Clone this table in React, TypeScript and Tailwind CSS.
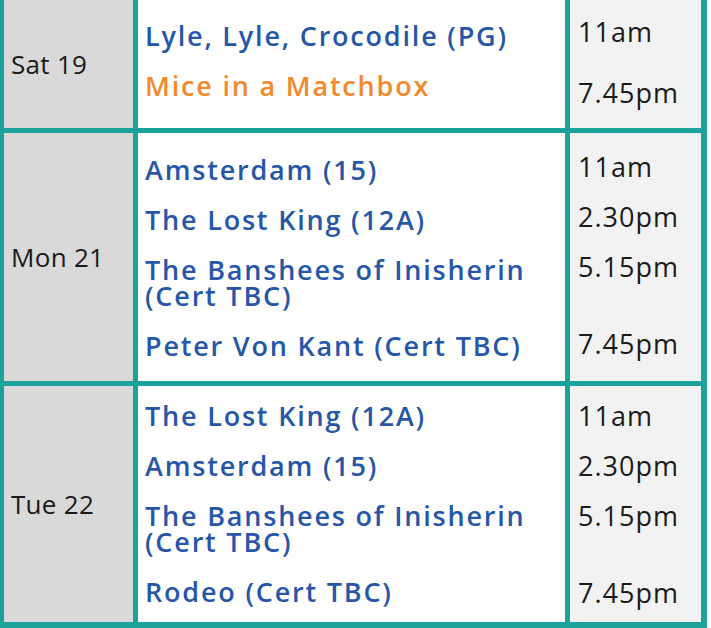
type Film = { title: string[]; orange?: boolean };
type Slot = { time: string; cls: string };
type Day = { day: string; cls: string; filmsCls: string; timesCls: string; films: Film[]; times: Slot[] };

const days: Day[] = [
  {
    day: "Sat 19",
    cls: "h-[128px]",
    filmsCls: "pt-[23px]",
    timesCls: "pt-[19px]",
    films: [{ title: ["Lyle, Lyle, Crocodile (PG)"] }, { title: ["Mice in a Matchbox"], orange: true }],
    times: [
      { time: "11am", cls: "" },
      { time: "7.45pm", cls: "mt-[35px]" },
    ],
  },
  {
    day: "Mon 21",
    cls: "h-[248px]",
    filmsCls: "pt-[24px]",
    timesCls: "pt-[21px]",
    films: [
      { title: ["Amsterdam (15)"] },
      { title: ["The Lost King (12A)"] },
      { title: ["The Banshees of Inisherin", "(Cert TBC)"] },
      { title: ["Peter Von Kant (Cert TBC)"] },
    ],
    times: [
      { time: "11am", cls: "" },
      { time: "2.30pm", cls: "mt-[24px]" },
      { time: "5.15pm", cls: "mt-[24px]" },
      { time: "7.45pm", cls: "mt-[51px]" },
    ],
  },
  {
    day: "Tue 22",
    cls: "h-[236px]",
    filmsCls: "pt-[17px]",
    timesCls: "pt-[17px]",
    films: [
      { title: ["The Lost King (12A)"] },
      { title: ["Amsterdam (15)"] },
      { title: ["The Banshees of Inisherin", "(Cert TBC)"] },
      { title: ["Rodeo (Cert TBC)"] },
    ],
    times: [
      { time: "11am", cls: "" },
      { time: "2.30pm", cls: "mt-[24px]" },
      { time: "5.15pm", cls: "mt-[24px]" },
      { time: "7.45pm", cls: "mt-[51px]" },
    ],
  },
];

export default function App() {
  return (
    <div className="w-[711px] h-[628px] bg-white font-['Open_Sans',sans-serif]">
      <div className="w-[707px] bg-[#1ba39b] pl-[4px] pr-[6px] pb-[6px] flex flex-col gap-[5px]">
        {days.map((d) => (
          <div key={d.day} className={`flex gap-[5px] ${d.cls}`}>
            <div className="w-[129px] bg-[#d9d9d9] flex items-center pl-[7px] text-[26px] tracking-[0.3px] text-[#1a1a1a]">
              {d.day}
            </div>
            <div className={`w-[427px] bg-white pl-[7px] flex flex-col gap-[24px] ${d.filmsCls}`}>
              {d.films.map((f) => (
                <div
                  key={f.title.join(" ")}
                  className={`text-[27px] leading-[26px] font-semibold tracking-[1.8px] ${f.orange ? "text-[#f18a2d]" : "text-[#2657a7]"}`}
                >
                  {f.title.map((t) => (
                    <div key={t}>{t}</div>
                  ))}
                </div>
              ))}
            </div>
            <div className={`w-[131px] bg-[#f2f2f2] pl-[8px] flex flex-col ${d.timesCls}`}>
              {d.times.map((s) => (
                <div key={s.time} className={`text-[27px] leading-[26px] text-[#1a1a1a] tracking-[1px] ${s.cls}`}>
                  {s.time}
                </div>
              ))}
            </div>
          </div>
        ))}
      </div>
    </div>
  );
}
